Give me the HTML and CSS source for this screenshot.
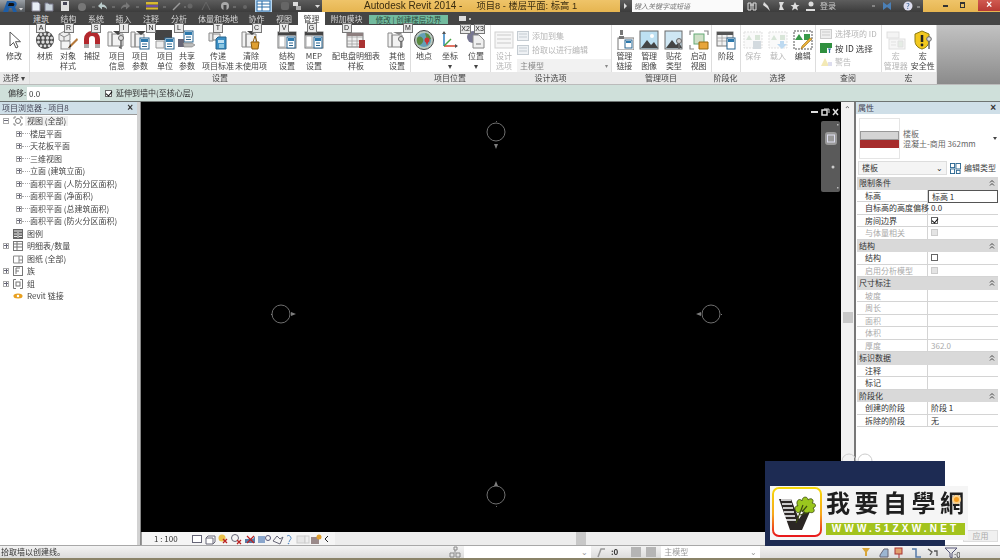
FILE: index.html
```html
<!DOCTYPE html>
<html lang="zh">
<head>
<meta charset="utf-8">
<title>Autodesk Revit 2014</title>
<link rel="stylesheet" href="styles.css">
</head>
<body>
<svg class="defs" width="0" height="0">
  <defs>
    <symbol id="i-cursor" viewBox="0 0 20 20"><path d="M6 2v14l3.500-3.500 2.500 5.500 2-1-2.500-5.300h5z" fill="#fff" stroke="#555"/></symbol>
    <symbol id="i-mat" viewBox="0 0 20 20"><circle cx="10" cy="10" r="9" fill="#4a4a4a"/><g fill="#ddd"><circle cx="6" cy="4.500" r="1.400"/><circle cx="10" cy="4" r="1.400"/><circle cx="14" cy="4.500" r="1.400"/><circle cx="3.500" cy="8" r="1.500"/><circle cx="8" cy="8" r="1.700"/><circle cx="12.500" cy="8" r="1.700"/><circle cx="16.500" cy="8" r="1.500"/><circle cx="3.500" cy="12" r="1.500"/><circle cx="8" cy="12" r="1.700"/><circle cx="12.500" cy="12" r="1.700"/><circle cx="16.500" cy="12" r="1.500"/><circle cx="6" cy="15.800" r="1.400"/><circle cx="10" cy="16" r="1.400"/><circle cx="14" cy="15.800" r="1.400"/></g></symbol>
    <symbol id="i-obj" viewBox="0 0 20 20"><path d="M1 4l6-3 5 3v6l-6 3-5-3z" fill="#eee" stroke="#888"/><path d="M1 4l5 3 6-3M6 7v6" fill="none" stroke="#888"/><rect x="3" y="11" width="9" height="8" fill="#f4f4f4" stroke="#888"/><path d="M19 8l-7 7-2 3 3-1 7-7z" fill="#b5793a"/><path d="M13 14l-3 4 3-1z" fill="#333"/></symbol>
    <symbol id="i-magnet" viewBox="0 0 20 20"><path d="M2 14V9a8 8 0 0 1 16 0v5h-5V9a3 3 0 0 0-6 0v5z" fill="#b3282d"/><rect x="2" y="14" width="5" height="4" fill="#aaa"/><rect x="13" y="14" width="5" height="4" fill="#aaa"/></symbol>
    <symbol id="i-info" viewBox="0 0 20 20"><path d="M1 2h4v14H1zM5 4h11v12H5z" fill="#f2f2f2" stroke="#888"/><path d="M6 1h10l-5 4z" fill="#444"/><circle cx="14" cy="8" r="2.500" fill="#ddd" stroke="#666"/><path d="M14 10v8l-2-1" fill="none" stroke="#666" stroke-width="1.500"/></symbol>
    <symbol id="i-param" viewBox="0 0 20 20"><path d="M1 2h4v15H1zM5 4h9v13H5z" fill="#f2f2f2" stroke="#888"/><path d="M6 1h10l-5 4z" fill="#444"/><rect x="10" y="8" width="9" height="11" fill="#fff" stroke="#29658f"/><rect x="11" y="9" width="7" height="3" fill="#2c79ad"/><path d="M12 14h5M12 16.500h5" stroke="#29658f"/></symbol>
    <symbol id="i-unit" viewBox="0 0 20 20"><rect x="0" y="0" width="17" height="10" fill="#444"/><rect x="10" y="8" width="9" height="11" fill="#fff" stroke="#29658f"/><rect x="11" y="9" width="7" height="3" fill="#2c79ad"/><path d="M12 14h5M12 16.500h5" stroke="#29658f"/><path d="M1 11h8v7H1z" fill="#eee" stroke="#999"/></symbol>
    <symbol id="i-share" viewBox="0 0 20 20"><rect x="7" y="1" width="9" height="11" fill="#fff" stroke="#29658f"/><rect x="8" y="2" width="7" height="3" fill="#2c79ad"/><path d="M9 7h5M9 9.500h5" stroke="#29658f"/><rect x="1" y="9" width="6" height="8" fill="#667"/><path d="M6 13h9l3 2-3 2H7z" fill="#bbb" stroke="#777" stroke-width=".6"/></symbol>
    <symbol id="i-trans" viewBox="0 0 20 20"><path d="M1 3h4v8H1z" fill="#e8e8e8" stroke="#888"/><path d="M5 4h7v6H5z" fill="#f2f2f2" stroke="#888"/><path d="M10 7h8v12H8V9z" fill="#3b8fc5" stroke="#26648e"/><path d="M10 10h6v3h-6z" fill="#bfe0f2"/><path d="M11 15h5M11 17h5" stroke="#dff"/><path d="M8 0h5l-2.500 3z" fill="#444"/></symbol>
    <symbol id="i-purge" viewBox="0 0 20 20"><path d="M1 2h4v15H1zM5 4h10v13H5z" fill="#f2f2f2" stroke="#888"/><path d="M6 1h10l-5 4z" fill="#444"/><path d="M10 12h8l-1 7h-6z" fill="#e0a030" stroke="#8a5d10"/><path d="M12 12l2-6 2 6" fill="none" stroke="#8a5d10"/></symbol>
    <symbol id="i-struct" viewBox="0 0 20 20"><rect x="1" y="2" width="18" height="16" fill="#eef3f7" stroke="#777"/><rect x="1" y="2" width="18" height="3.500" fill="#444"/><rect x="2" y="6" width="6" height="11" fill="#fff" stroke="#aaa"/><rect x="10" y="7" width="8" height="11" fill="#fff" stroke="#29658f"/><rect x="11" y="8" width="6" height="3" fill="#2c79ad"/><path d="M12 13h4M12 15.500h4" stroke="#29658f"/></symbol>
    <symbol id="i-panel" viewBox="0 0 20 20"><rect x="1" y="3" width="16" height="14" fill="#f0f0f0" stroke="#777"/><path d="M1 7h16M1 11h16M1 14h16M6 3v14M11 3v14" stroke="#999" stroke-width=".7"/><rect x="1" y="3" width="16" height="3" fill="#8d7f7f"/><rect x="13" y="10" width="6" height="8" fill="#a33"/></symbol>
    <symbol id="i-other" viewBox="0 0 20 20"><path d="M1 3h4v14H1zM5 5h10v12H5z" fill="#f2f2f2" stroke="#888"/><path d="M6 2h11l-5 3z" fill="#888"/><circle cx="14" cy="9" r="2.500" fill="#ddd" stroke="#666"/><path d="M14 11v7" stroke="#666" stroke-width="1.500"/></symbol>
    <symbol id="i-globe" viewBox="0 0 20 20"><circle cx="10" cy="10" r="9.500" fill="#b8c8bf" stroke="#444"/><circle cx="10" cy="10" r="7" fill="#64a0b8"/><path d="M3 8c3-3 5-1 6 1s-1 5-3 6-4-3-3-7zM11 3c3 0 5 2 6 6l-4 1z" fill="#5a8a40"/><circle cx="13" cy="10" r="2.500" fill="#cc3333"/><path d="M11.500 11.500l1.500 4 1.500-4z" fill="#cc3333"/></symbol>
    <symbol id="i-coord" viewBox="0 0 20 20"><path d="M4 2v14" stroke="#2d7fc0" stroke-width="1.500"/><path d="M4 16h13" stroke="#d9442f" stroke-width="1.500"/><path d="M4 16l7-7" stroke="#46a546" stroke-width="1.500"/><path d="M2 4l2-3 2 3zM15 14l3 2-3 2z" fill="#555"/></symbol>
    <symbol id="i-pos" viewBox="0 0 20 20"><circle cx="7" cy="7" r="6" fill="#557" opacity=".8"/><path d="M7 5h6l5 5v8H7z" fill="#f0f0f0" stroke="#888"/><path d="M10 14h5" stroke="#777"/></symbol>
    <symbol id="i-opt" viewBox="0 0 20 20"><rect x="1" y="2" width="18" height="16" fill="#f6f6f6" stroke="#ccc"/><path d="M3 5h14M3 9h14M3 13h14" stroke="#d5d5d5" stroke-width="1.500"/></symbol>
    <symbol id="i-link" viewBox="0 0 20 20"><rect x="4" y="8" width="16" height="12" fill="#fff" stroke="#777"/><rect x="11" y="10" width="7" height="8" fill="#fff" stroke="#29658f"/><rect x="12" y="11" width="5" height="2" fill="#2c79ad"/><path d="M6 0h3v5H6zM5 6h5v3H5z" fill="#777"/></symbol>
    <symbol id="i-img" viewBox="0 0 20 20"><rect x="1" y="1" width="18" height="18" fill="#bde0f2" stroke="#6a6a6a"/><path d="M2 18l6-8 4 5 3-3 4 6z" fill="#444"/><circle cx="13" cy="6" r="2" fill="#fff"/></symbol>
    <symbol id="i-decal" viewBox="0 0 20 20"><rect x="1" y="1" width="17" height="18" fill="#cfe7f4" stroke="#6a6a6a"/><path d="M2 18l6-8 4 5 3-3 3 6z" fill="#444"/><circle cx="15" cy="11" r="2.500" fill="#ccc" stroke="#666"/><path d="M15 13v6" stroke="#666" stroke-width="1.500"/></symbol>
    <symbol id="i-start" viewBox="0 0 20 20"><path d="M1 5V1h4M15 1h4v4M1 15v4h4" fill="none" stroke="#888" stroke-width="1.200"/><rect x="5" y="4" width="10" height="10" fill="#cfe0c8" stroke="#6a7"/><path d="M10 12h9v7h-9z" fill="#e8a53a" stroke="#9a6a10"/></symbol>
    <symbol id="i-phase" viewBox="0 0 20 20"><rect x="1" y="2" width="16" height="14" fill="#f2f2f2" stroke="#777"/><rect x="1" y="2" width="16" height="3" fill="#555"/><path d="M1 8h16M1 11h16M6 5v11M11 5v11" stroke="#999" stroke-width=".7"/><rect x="11" y="8" width="8" height="11" fill="#fff" stroke="#29658f"/><rect x="12" y="9" width="6" height="3" fill="#2c79ad"/></symbol>
    <symbol id="i-save" viewBox="0 0 20 20"><rect x="1" y="2" width="18" height="16" fill="#fafafa" stroke="#ddd" stroke-dasharray="2 1"/><path d="M6 5l3 5H3zM12 5h5v5h-5z" fill="#d4e3d4"/><rect x="10" y="11" width="8" height="8" fill="#cfd6dc"/></symbol>
    <symbol id="i-load" viewBox="0 0 20 20"><rect x="1" y="2" width="18" height="16" fill="#fafafa" stroke="#ddd" stroke-dasharray="2 1"/><path d="M6 5l3 5H3zM12 5h5v5h-5z" fill="#d4e3d4"/><path d="M12 11h4v3h3l-5 5-5-5h3z" fill="#b6d5ef"/></symbol>
    <symbol id="i-edit" viewBox="0 0 20 20"><rect x="1" y="1" width="18" height="18" fill="#fff" stroke="#555" stroke-dasharray="2 1"/><path d="M6 4l4 6H2z" fill="#3a9a4a"/><rect x="11" y="4" width="6" height="6" fill="#3a9a4a"/><path d="M19 9l-8 8-3 2 1-3 8-8z" fill="#e8b13a" stroke="#9a6a10" stroke-width=".6"/></symbol>
    <symbol id="i-mgr" viewBox="0 0 20 20"><rect x="1" y="2" width="12" height="6" fill="#f3f3f3" stroke="#ddd"/><rect x="3" y="9" width="16" height="10" fill="#f6f6f6" stroke="#ddd"/><path d="M5 12h5M5 15h5M12 11h5v6h-5z" fill="#e3ebe3" stroke="#ddd"/></symbol>
    <symbol id="i-shield" viewBox="0 0 20 20"><path d="M9 1l7 3v7c0 4-3 7-7 8-4-1-7-4-7-8V4z" fill="#f2c81f" stroke="#8c7a10"/><path d="M9 5v7" stroke="#222" stroke-width="2.500"/><circle cx="9" cy="15" r="1.400" fill="#222"/><circle cx="16" cy="9" r="2.300" fill="#ddd" stroke="#666"/><path d="M16 11v8" stroke="#666" stroke-width="1.500"/></symbol>
    <symbol id="i-ids" viewBox="0 0 12 10"><rect x=".5" y=".5" width="11" height="9" fill="#eee" stroke="#ccc"/><path d="M2 3h8M2 6h8" stroke="#ccc"/></symbol>
    <symbol id="i-idg" viewBox="0 0 12 10"><rect width="12" height="5" fill="#2f8f3f"/><rect y="5" width="7" height="5" fill="#2f8f3f"/><path d="M8 6h3M9.500 6v4" stroke="#2f6f9f" stroke-width="1.200"/></symbol>
    <symbol id="i-warn" viewBox="0 0 12 10"><path d="M5 1l4 8H1z" fill="#f3e9b5"/><rect x="8" y="5" width="4" height="4" fill="#dde"/></symbol>
    <symbol id="i-add" viewBox="0 0 12 10"><rect x=".5" y=".5" width="11" height="9" fill="#eef1f4" stroke="#c5ccd2"/><path d="M2 3h8M2 6h8" stroke="#c5ccd2"/></symbol>
    <symbol id="i-chev" viewBox="0 0 6 6"><path d="M1 2.500l2-2 2 2M1 5.500l2-2 2 2" fill="none" stroke="#444"/></symbol>
    <symbol id="i-views" viewBox="0 0 10 10"><circle cx="5" cy="5" r="2.500" fill="none" stroke="#777"/><path d="M1 3V1h2M7 1h2v2M1 7v2h2M7 9h2V7" fill="none" stroke="#888"/></symbol>
    <symbol id="i-legend" viewBox="0 0 10 10"><rect width="10" height="10" fill="#666"/><path d="M1 2h8M5 3v6M1 5h3M6 5h3M1 7.500h3M6 7.500h3" stroke="#eee"/></symbol>
    <symbol id="i-sched" viewBox="0 0 10 10"><rect x=".5" y=".5" width="9" height="9" fill="#fff" stroke="#777"/><path d="M.5 3h9M.5 6h9M4 .5v9" stroke="#777"/></symbol>
    <symbol id="i-sheet" viewBox="0 0 10 10"><path d="M.5 2h9v7h-9z" fill="#fff" stroke="#888"/><path d="M6 2v7M6 6h3.500" stroke="#888"/></symbol>
    <symbol id="i-fam" viewBox="0 0 10 10"><rect x=".5" y=".5" width="9" height="9" fill="#fff" stroke="#777"/><path d="M3 2h4M3 2v6M3 5h3" stroke="#777"/></symbol>
    <symbol id="i-grp" viewBox="0 0 10 10"><path d="M3 .5H.5v9H3M7 .5h2.500v9H7" fill="none" stroke="#777"/><rect x="3" y="3" width="4" height="4" fill="none" stroke="#777"/></symbol>
    <symbol id="i-rlink" viewBox="0 0 12 8"><ellipse cx="6" cy="4" rx="5.500" ry="3" fill="#e8a020"/><circle cx="6" cy="4" r="1.500" fill="#fff"/></symbol>
    <symbol id="i-edit-type" viewBox="0 0 12 12"><rect x=".5" y=".5" width="4.500" height="4.500" fill="#fff" stroke="#29658f"/><rect x="6.500" y=".5" width="5" height="6" fill="#fff" stroke="#29658f"/><rect x=".5" y="6.500" width="4.500" height="5" fill="#fff" stroke="#29658f"/><rect x="7" y="8" width="4" height="3.500" fill="#fff" stroke="#29658f"/></symbol>
  </defs>
</svg>

<div class="app">
  <header class="titlebar">
    <div class="appbtn">
      <svg width="25" height="15" viewBox="0 0 25 15"><path d="M2 15L7 1h6c4 0 5 4 2 6l3 8h-3.500l-3-7H9.500L7 15z" fill="#1d5ea8"/><path d="M9 3h3.500c2 0 2.500 2 1 3H8z" fill="#111"/><path d="M19 8h4l-2 2.500z" fill="#ddd"/></svg>
    </div>
    <svg class="qat" width="297" height="12" viewBox="25 0 297 12">
      <path d="M32 2h6l2 2v7h-8z" fill="#e8eef5" stroke="#889"/>
      <path d="M45 3h3l1 1h4v7h-8z" fill="#c8d2da" stroke="#778"/>
      <path d="M61 1h8v10h-8z" fill="#ddd"/><rect x="63" y="2" width="4" height="3" fill="#445"/>
      <circle cx="82" cy="7" r="4" fill="#777"/><path d="M92 7h3" stroke="#888"/>
      <path d="M98 6l4-4v2.500c3 0 5 2 5 5-1-2-3-2.500-5-2.500V9.500z" fill="#bcc"/><path d="M112 7h3" stroke="#888"/>
      <path d="M130 6l-4-4v2.500c-3 0-5 2-5 5 1-2 3-2.500 5-2.500V9.500z" fill="#777"/><path d="M136 7h3" stroke="#888"/>
      <rect x="146" y="2" width="12" height="2.500" fill="#d8b930"/><rect x="146" y="5" width="12" height="2" fill="#6b4fa3"/><rect x="146" y="7.500" width="12" height="2" fill="#d8b930"/><path d="M163 7h3" stroke="#888"/>
      <path d="M173 10l7-7" stroke="#999" stroke-width="1.500"/><path d="M184 7h2" stroke="#888"/>
      <circle cx="190" cy="6" r="2.500" fill="#666"/>
      <path d="M202 10l4-8 4 8" fill="none" stroke="#666"/>
      <circle cx="225" cy="6" r="4" fill="#aaa"/><rect x="223.500" y="5" width="3" height="5" fill="#444"/><path d="M233 7h3" stroke="#888"/>
      <circle cx="245" cy="7" r="2" fill="#666"/>
      <rect x="255" y="0" width="17" height="12" fill="#b8d7f0"/><rect x="257" y="1" width="13" height="10" fill="#fff" stroke="#2d6ea8"/><path d="M257 4h13M257 7h13M262 1v10" stroke="#2d6ea8"/>
      <rect x="281" y="2" width="8" height="8" rx="2" fill="#666"/><rect x="293" y="2" width="5" height="4" fill="#ddd"/><rect x="296" y="6" width="5" height="4" fill="#aaa"/><path d="M315 5h5l-2.500 3z" fill="#ddd"/>
    </svg>
    <div class="doc-title"><span>Autodesk Revit 2014 -</span><span class="doc-name">项目8 - 楼层平面: 标高 1</span></div>
    <div class="search-arrow"></div>
    <div class="search">键入关键字或短语</div>
    <div class="info">
      <svg width="72" height="12" viewBox="743 0 72 12"><path d="M748 3h3v7h-3zM753 3h3v7h-3zM750 5h4" stroke="#ddd" fill="none"/><path d="M764 2l4 4 2 5-3-3-4-3z" fill="#ddd"/><path d="M779 2h5l-2 4 2 4h-5l1-4z" fill="#ddd"/><path d="M795 2l1.500 3h3l-2.500 2 1 3.500-3-2-3 2 1-3.500-2.500-2h3z" fill="#ddd"/><circle cx="811" cy="4" r="2.500" fill="#ddd"/><path d="M806 10h10" stroke="#ddd" stroke-width="2"/></svg>
      <span class="login">登录</span>
      <svg class="info-r" width="65" height="12" viewBox="858 0 65 12"><path d="M872 6h3" stroke="#bbb"/><path d="M883 2l4 3 4-3v8l-4-3-4 3z" fill="#4b7fb5"/><circle cx="908" cy="6" r="4.500" fill="#dde"/><text x="906" y="9" font-size="8" fill="#2d5c8f">?</text><path d="M917 7h3" stroke="#bbb"/></svg>
    </div>
    <div class="winbtns">
      <span class="wb-min"></span>
      <span class="wb-max"></span>
      <span class="wb-close">×</span>
    </div>
  </header>

  <nav class="tabs">
    <div class="tab w28">建筑<b class="kt">A</b></div>
    <div class="tab w27">结构<b class="kt">R</b></div>
    <div class="tab w28">系统<b class="kt">S</b></div>
    <div class="tab w27">插入<b class="kt">I</b></div>
    <div class="tab w28">注释<b class="kt">N</b></div>
    <div class="tab w28">分析<b class="kt">L</b></div>
    <div class="tab w50">体量和场地<b class="kt">T</b></div>
    <div class="tab w27">协作<b class="kt">C</b></div>
    <div class="tab w28">视图<b class="kt">V</b></div>
    <div class="tab w27 active">管理<b class="kt">G</b></div>
    <div class="tab w43">附加模块<b class="kt">D</b></div>
    <div class="context">修改 | 创建楼层边界</div>
    <b class="kt kt-m">M</b>
    <b class="kt kt-x2">X2</b>
    <b class="kt kt-x3">X3</b>
    <svg class="tab-extra" width="12" height="8" viewBox="0 0 12 8"><rect width="7" height="5" y="1" fill="#ddd"/><rect x="10" y="3" width="2" height="2" fill="#bbb"/></svg>
  </nav>

  <section class="ribbon">
    <div class="panel p30">
      <div class="tools">
        <div class="tool t28"><svg class="ic"><use href="#i-cursor"/></svg><span>修改</span></div>
      </div>
      <div class="plabel">选择 ▾</div>
    </div>
    <div class="panel p381">
      <div class="tools tools-set">
        <div class="tool g2"><svg class="ic"><use href="#i-mat"/></svg><span>材质</span></div>
        <div class="tool g3"><svg class="ic"><use href="#i-obj"/></svg><span>对象<br>样式</span></div>
        <div class="tool g4"><svg class="ic"><use href="#i-magnet"/></svg><span>捕捉</span></div>
        <div class="tool g5"><svg class="ic"><use href="#i-info"/></svg><span>项目<br>信息</span></div>
        <div class="tool g3"><svg class="ic"><use href="#i-param"/></svg><span>项目<br>参数</span></div>
        <div class="tool g5"><svg class="ic"><use href="#i-unit"/></svg><span>项目<br>单位</span></div>
        <div class="tool g2"><svg class="ic"><use href="#i-share"/></svg><span>共享<br>参数</span></div>
        <div class="tool g11"><svg class="ic"><use href="#i-trans"/></svg><span>传递<br>项目标准</span></div>
        <div class="tool g13"><svg class="ic"><use href="#i-purge"/></svg><span>清除<br>未使用项</span></div>
        <div class="tool g16"><svg class="ic"><use href="#i-struct"/></svg><span>结构<br>设置</span></div>
        <div class="tool g7"><svg class="ic"><use href="#i-struct"/></svg><span>MEP<br>设置</span></div>
        <div class="tool g22"><svg class="ic"><use href="#i-panel"/></svg><span>配电盘明细表<br>样板</span></div>
        <div class="tool g21"><svg class="ic"><use href="#i-other"/></svg><span>其他<br>设置</span></div>
      </div>
      <div class="plabel">设置</div>
    </div>
    <div class="panel p79">
      <div class="tools">
        <div class="tool t26"><svg class="ic"><use href="#i-globe"/></svg><span>地点</span></div>
        <div class="tool t26"><svg class="ic"><use href="#i-coord"/></svg><span>坐标<br>▾</span></div>
        <div class="tool t26"><svg class="ic"><use href="#i-pos"/></svg><span>位置<br>▾</span></div>
      </div>
      <div class="plabel">项目位置</div>
    </div>
    <div class="panel p121">
      <div class="tools">
        <div class="tool t26 off"><svg class="ic"><use href="#i-opt"/></svg><span>设计<br>选项</span></div>
        <div class="stack">
          <div class="srow off"><svg class="sic"><use href="#i-add"/></svg>添加到集</div>
          <div class="srow off"><svg class="sic"><use href="#i-add"/></svg>拾取以进行编辑</div>
          <div class="rselect"><span>主模型</span><i>▾</i></div>
        </div>
      </div>
      <div class="plabel">设计选项</div>
    </div>
    <div class="panel p100">
      <div class="tools">
        <div class="tool t25"><svg class="ic"><use href="#i-link"/></svg><span>管理<br>链接</span></div>
        <div class="tool t25"><svg class="ic"><use href="#i-img"/></svg><span>管理<br>图像</span></div>
        <div class="tool t25"><svg class="ic"><use href="#i-decal"/></svg><span>贴花<br>类型</span></div>
        <div class="tool t25"><svg class="ic"><use href="#i-start"/></svg><span>启动<br>视图</span></div>
      </div>
      <div class="plabel">管理项目</div>
    </div>
    <div class="panel p29">
      <div class="tools">
        <div class="tool t28"><svg class="ic"><use href="#i-phase"/></svg><span>阶段</span></div>
      </div>
      <div class="plabel">阶段化</div>
    </div>
    <div class="panel p75">
      <div class="tools">
        <div class="tool t25 off"><svg class="ic"><use href="#i-save"/></svg><span>保存</span></div>
        <div class="tool t25 off"><svg class="ic"><use href="#i-load"/></svg><span>载入</span></div>
        <div class="tool t25"><svg class="ic"><use href="#i-edit"/></svg><span>编辑</span></div>
      </div>
      <div class="plabel">选择</div>
    </div>
    <div class="panel p66">
      <div class="tools">
        <div class="stack stack-q">
          <div class="srow off"><svg class="sic"><use href="#i-ids"/></svg>选择项的 ID</div>
          <div class="srow on"><svg class="sic"><use href="#i-idg"/></svg>按 ID 选择</div>
          <div class="srow off"><svg class="sic"><use href="#i-warn"/></svg>警告</div>
        </div>
      </div>
      <div class="plabel">查阅</div>
    </div>
    <div class="panel p55">
      <div class="tools">
        <div class="tool t28 off"><svg class="ic"><use href="#i-mgr"/></svg><span>宏<br>管理器</span></div>
        <div class="tool t27"><svg class="ic"><use href="#i-shield"/></svg><span>宏<br>安全性</span></div>
      </div>
      <div class="plabel">宏</div>
    </div>
    <div class="ribbon-empty"></div>
  </section>

  <section class="options">
    <label class="opt-label">偏移:</label>
    <div class="opt-input">0.0</div>
    <span class="cb cb-on opt-cb"></span>
    <span>延伸到墙中(至核心层)</span>
  </section>

  <main class="main">
    <aside class="browser">
      <div class="phead"><span>项目浏览器 - 项目8</span><b>×</b></div>
      <ul class="tree">
        <li class="r1"><i class="exp minus"></i><svg class="tic"><use href="#i-views"/></svg><span class="sel">视图 (全部)</span></li>
        <li class="r2"><i class="exp"></i><u></u>楼层平面</li>
        <li class="r2"><i class="exp"></i><u></u>天花板平面</li>
        <li class="r2"><i class="exp"></i><u></u>三维视图</li>
        <li class="r2"><i class="exp"></i><u></u>立面 (建筑立面)</li>
        <li class="r2"><i class="exp"></i><u></u>面积平面 (人防分区面积)</li>
        <li class="r2"><i class="exp"></i><u></u>面积平面 (净面积)</li>
        <li class="r2"><i class="exp"></i><u></u>面积平面 (总建筑面积)</li>
        <li class="r2"><i class="exp"></i><u></u>面积平面 (防火分区面积)</li>
        <li class="r1"><i class="noexp"></i><svg class="tic"><use href="#i-legend"/></svg>图例</li>
        <li class="r1"><i class="exp"></i><svg class="tic"><use href="#i-sched"/></svg>明细表/数量</li>
        <li class="r1"><i class="noexp"></i><svg class="tic"><use href="#i-sheet"/></svg>图纸 (全部)</li>
        <li class="r1"><i class="exp"></i><svg class="tic"><use href="#i-fam"/></svg>族</li>
        <li class="r1"><i class="exp"></i><svg class="tic"><use href="#i-grp"/></svg>组</li>
        <li class="r1"><i class="noexp"></i><svg class="tic"><use href="#i-rlink"/></svg>Revit 链接</li>
      </ul>
    </aside>
    <div class="splitter"></div>

    <div class="view">
      <div class="canvas">
        <svg class="marks" width="700" height="429" viewBox="141 103 700 429">
          <g fill="none" stroke="#6f6f6f" stroke-width="1">
            <circle cx="496" cy="132" r="9"/><circle cx="281" cy="314" r="9"/><circle cx="711" cy="314" r="9"/><circle cx="496" cy="495" r="9"/>
          </g>
          <g fill="#7d7d7d">
            <path d="M494 144h4l-2 5zM291 312v4l5-2zM701 312v4l-5-2zM494 486h4l-2-5z"/>
            <path d="M496 121h.8v1h-.8zM271 314h1v1h-1zM721 314h1v1h-1zM496 506h.8v1h-.8z"/>
          </g>
        </svg>
        <svg class="vctl" width="28" height="8" viewBox="0 0 28 8"><path d="M0 4h7" stroke="#ddd" stroke-width="2"/><rect x="11" y="2" width="5" height="5" fill="none" stroke="#ddd" stroke-width="1.500"/><path d="M13 1h5v4" stroke="#ddd" fill="none"/><path d="M22 1l5 6M27 1l-5 6" stroke="#ddd" stroke-width="1.500"/></svg>
        <div class="navbar">
          <svg width="19" height="71" viewBox="0 0 19 71"><rect x="4" y="11" width="12" height="13" rx="3" fill="#9a9a9a"/><rect x="6.500" y="14" width="7" height="7" fill="none" stroke="#dde"/><circle cx="12" cy="46" r="1.500" fill="#ccc"/><path d="M16 3h1.500v1.500H16zM16 66h1.500v1.500H16z" fill="#bbb"/></svg>
        </div>
      </div>
      <div class="viewbar">
        <span class="scale">1 : 100</span>
        <svg width="140" height="12" viewBox="190 0 140 12">
          <rect x="191.500" y="2.500" width="9" height="7" fill="#fff" stroke="#667"/>
          <path d="M205 5h7v6h-7zM205 5l2-2h7v6l-2 2" fill="#fff" stroke="#667"/>
          <circle cx="221" cy="5" r="3.500" fill="#e9c24a"/><path d="M222 6l4 4M226 6l-4 4" stroke="#b22" stroke-width="1.300"/>
          <circle cx="234" cy="5" r="3.500" fill="none" stroke="#667"/><path d="M236 7l4 4M240 7l-4 4" stroke="#b22" stroke-width="1.300"/>
          <path d="M244 6h8l2-3v7h-10z" fill="#567ba8"/><path d="M246 3l7 7M253 3l-7 7" stroke="#b22" stroke-width="1.200"/>
          <path d="M257 3h7v7h-7z" fill="#8aa6cc"/><circle cx="267" cy="5" r="2.500" fill="none" stroke="#557"/>
          <path d="M272 8l4-5 3 3 3-2-3 7z" fill="none" stroke="#667"/>
          <path d="M286 3a2.500 2.500 0 0 1 3 4l-1 2" fill="none" stroke="#5b8fc7"/><circle cx="287.500" cy="10.500" r=".8" fill="#5b8fc7"/>
          <rect x="296" y="3" width="8" height="7" fill="#e6e6e6" stroke="#ccc"/><rect x="304" y="3" width="4" height="7" fill="#eee" stroke="#ccc"/>
          <path d="M310 4h8v7h-8z" fill="#9a8a8a"/><circle cx="318" cy="4" r="2.500" fill="#e0a030"/>
          <path d="M327 3l-3 3 3 3" fill="none" stroke="#222"/>
        </svg>
        <div class="hscroll"><span></span></div>
      </div>
    </div>

    <div class="vscroll"><span class="up">⌃</span><span class="thumb"></span></div>

    <aside class="props">
      <div class="phead"><span>属性</span><b>×</b></div>
      <div class="type">
        <div class="swatch"><i class="s-g"></i><i class="s-r"></i></div>
        <div class="type-text">楼板<br>混凝土-商用 362mm</div>
        <span class="type-arrow"></span>
      </div>
      <div class="filter">
        <div class="fselect"><span>楼板</span><i>⌄</i></div>
        <div class="etype"><svg width="11" height="11"><use href="#i-edit-type"/></svg>编辑类型</div>
      </div>
      <div class="ptable">
        <div class="group">限制条件<svg class="chev"><use href="#i-chev"/></svg></div>
        <div class="prow"><span>标高</span><span class="val active">标高 1</span></div>
        <div class="prow"><span>自标高的高度偏移</span><span class="val">0.0</span></div>
        <div class="prow"><span>房间边界</span><span class="val"><i class="cb cb-on"></i></span></div>
        <div class="prow dis"><span>与体量相关</span><span class="val"><i class="cb cb-dis"></i></span></div>
        <div class="group">结构<svg class="chev"><use href="#i-chev"/></svg></div>
        <div class="prow"><span>结构</span><span class="val"><i class="cb"></i></span></div>
        <div class="prow dis"><span>启用分析模型</span><span class="val"><i class="cb cb-dis"></i></span></div>
        <div class="group">尺寸标注<svg class="chev"><use href="#i-chev"/></svg></div>
        <div class="prow dis"><span>坡度</span><span class="val"></span></div>
        <div class="prow dis"><span>周长</span><span class="val"></span></div>
        <div class="prow dis"><span>面积</span><span class="val"></span></div>
        <div class="prow dis"><span>体积</span><span class="val"></span></div>
        <div class="prow dis"><span>厚度</span><span class="val">362.0</span></div>
        <div class="group">标识数据<svg class="chev"><use href="#i-chev"/></svg></div>
        <div class="prow"><span>注释</span><span class="val"></span></div>
        <div class="prow"><span>标记</span><span class="val"></span></div>
        <div class="group">阶段化<svg class="chev"><use href="#i-chev"/></svg></div>
        <div class="prow"><span>创建的阶段</span><span class="val">阶段 1</span></div>
        <div class="prow"><span>拆除的阶段</span><span class="val">无</span></div>
      </div>
      <div class="apply">应用</div>
    </aside>
  </main>

  <footer class="status">
    <span class="status-msg">拾取墙以创建线。</span>
    <svg class="st-ic" width="12" height="12" viewBox="0 0 12 12"><path d="M5 1h3v3H5zM1 7h4v4H1zM7 7h4v4H7zM6 4v3" fill="none" stroke="#888"/></svg>
    <div class="st-select st-w"><i>⌄</i></div>
    <svg class="st-ic2" width="9" height="12" viewBox="0 0 9 12"><path d="M1 11l3-8h4" fill="none" stroke="#999" stroke-width="1.500"/></svg>
    <b class="st-zero">:0</b>
    <i class="st-sq"></i><i class="st-sq"></i>
    <div class="st-select st-m"><span>主模型</span><i>⌄</i></div>
    <svg class="st-right" width="100" height="13" viewBox="860 0 100 13">
      <path d="M862 2h8l-3 4v4h-2V6z" fill="#d9a63a"/>
      <path d="M880 9l4-6h4v8h-8z" fill="#9cb6d1" stroke="#667"/>
      <rect x="895" y="2" width="7" height="6" fill="#e0a070" stroke="#a33"/><path d="M899 8v4" stroke="#a33"/>
      <path d="M912 3h4v8h5" fill="none" stroke="#557aa8" stroke-width="1.500"/>
      <path d="M928 3l4 3-2 3M934 5h3v5" fill="none" stroke="#555" stroke-width="1.300"/>
      <path d="M945 2h12l-5 5v5l-2-1V7z" fill="none" stroke="#557"/><text x="954" y="12" font-size="8" fill="#333">:0</text>
    </svg>
  </footer>

  <svg class="arcs" width="32" height="12" viewBox="0 0 32 12"><path d="M1 12a7 7 0 0 1 14 0M17 12a7 7 0 0 1 14 0" fill="none" stroke="#ccc"/></svg>

  <aside class="watermark">
    <div class="wm-card">
      <div class="wm-logo">
        <svg width="50" height="50" viewBox="0 0 50 50">
          <defs><linearGradient id="wmg" x1="0" y1="0" x2="0" y2="1"><stop offset="0" stop-color="#f7d80a"/><stop offset=".55" stop-color="#f6a71c"/><stop offset="1" stop-color="#e8181c"/></linearGradient></defs>
          <rect x="1" y="1" width="48" height="48" rx="6" fill="#fff" stroke="url(#wmg)" stroke-width="2"/>
          <path d="M7 12h12l8 20 9-14 4 2-10 23H18z" fill="#2b2624"/>
          <path d="M9 13h10M10 17h10M11 21h10M12 25h10M13 29h10M14 33h10" stroke="#fff" stroke-width="1.300"/>
          <path d="M26 26c-5-3-3-8 0-7-3-4 1-9 4-5 0-5 6-5 6-1 3-3 7 0 4 3 4 0 5 4 1 5 3 3 0 6-4 4-2 2-5 1-6-2z" fill="#9ac61e" stroke="#3c4a10" stroke-width=".8"/>
          <path d="M24 36l7-18M30 25l5-6M28 28l7-2" stroke="#3c4a10" stroke-width="1.200" fill="none"/>
        </svg>
      </div>
      <div class="wm-text">
        <div class="wm-name">我要自學網<i class="wm-dot"></i></div>
        <div class="wm-url">WWW.51ZXW.NET</div>
      </div>
    </div>
  </aside>
</div>
</body>
</html>
```

FILE: styles.css
```css
* { box-sizing: border-box; }
html, body { margin: 0; padding: 0; }
body {
  width: 1000px; height: 560px; overflow: hidden; background: #fff;
  font: 8px/10px "Noto Sans CJK SC", "Liberation Sans", sans-serif;
  color: #333;
}
.defs { position: absolute; }
.app {
  position: relative; width: 1000px; height: 560px;
  display: grid; grid-template-rows: 12px 13px 60px 17px 443px 15px;
  filter: blur(.35px);
}
i { font-style: normal; }
ul { list-style: none; margin: 0; padding: 0; }

/* title bar */
.titlebar { display: flex; background: linear-gradient(#5d5d5d, #3c3c3c); position: relative; z-index: 2; }
.appbtn { width: 25px; height: 15px; background: linear-gradient(#9aa0a6, #3f4347); }
.qat { flex: none; }
.doc-title {
  width: 298px; padding-left: 42px; display: flex; align-items: center;
  background: linear-gradient(#efc469, #e6b550);
  font: 10px/12px "Liberation Sans", "Noto Sans CJK SC", sans-serif; color: #3a2c10; white-space: nowrap;
}
.doc-name { margin-left: 14px; font-size: 9.300px; }
.search-arrow { width: 12px; position: relative; }
.search-arrow::after {
  content: ""; position: absolute; left: 4px; top: 3px;
  border-left: 3px solid #ddd; border-top: 3px solid transparent; border-bottom: 3px solid transparent;
}
.search { width: 111px; background: #fafafa; font-size: 7px; font-style: italic; color: #777; line-height: 12px; padding-left: 2px; }
.info { width: 180px; display: flex; color: #ccc; line-height: 12px; }
.login { width: 43px; padding-left: 5px; }
.winbtns {
  width: 77px; display: flex; align-items: flex-start; background: linear-gradient(#efc469, #e6b550);
}
.wb-min { width: 6px; height: 2px; background: #333; margin: 5px 0 0 20px; }
.wb-max { width: 6px; height: 6px; border: 1px solid #333; border-top-width: 2px; margin: 2px 0 0 12px; }
.wb-close {
  width: 26px; height: 11px; margin-left: 13px; background: linear-gradient(#d05a50, #b83a34);
  color: #fff; font: bold 10px/10px "Liberation Sans", sans-serif; text-align: center;
}

/* tabs */
.tabs { display: flex; padding-left: 27px; background: #454545; color: #d8d8d8; position: relative; z-index: 3; line-height: 13px; }
.tab { position: relative; text-align: center; }
.tab.active { background: #fff; color: #444; }
.w27 { width: 27px; } .w28 { width: 28px; } .w43 { width: 43px; } .w50 { width: 50px; }
.kt {
  position: absolute; top: 11px; left: 50%; width: 10px; height: 10px; margin-left: -5px;
  background: #e9e9e9; border: 1px solid #777; color: #222;
  font: 7px/8px "Liberation Sans", sans-serif; text-align: center;
}
.kt-m { left: 408px; top: 11px; }
.kt-x2 { left: 465px; top: 12px; width: 11px; }
.kt-x3 { left: 479px; top: 12px; width: 11px; }
.context {
  width: 79px; height: 9px; margin: 3px 0 0 1px; background: #72bb9e; color: #2e4a3e;
  line-height: 9px; text-align: center; font-size: 7.500px;
}
.tab-extra { margin: 3px 0 0 11px; }

/* ribbon */
.ribbon { display: flex; background: #fff; border-bottom: 1px solid #bbb; }
.panel { display: flex; flex-direction: column; border-right: 1px solid #ddd; }
.p30 { width: 30px; } .p381 { width: 381px; padding-left: 3px; } .p79 { width: 80px; } .p121 { width: 121px; }
.p100 { width: 100px; } .p29 { width: 29px; } .p75 { width: 75px; } .p66 { width: 66px; } .p55 { width: 55px; }
.panel .tools { flex: 1; display: flex; min-height: 0; }
.plabel { height: 12px; margin-left: -1px; background: #e9e9e9; text-align: center; line-height: 12px; color: #444; }
.p381 .plabel { margin-left: -3px; }
.tool { display: flex; flex-direction: column; align-items: center; padding-top: 5px; text-align: center; color: #444; }
.tool span { white-space: nowrap; margin-top: 1px; }
.tools-set .tool { width: 20px; }
.g2 { margin-left: 2px; } .g3 { margin-left: 3px; } .g4 { margin-left: 4px; } .g5 { margin-left: 5px; }
.g7 { margin-left: 7px; } .g11 { margin-left: 11px; } .g13 { margin-left: 13px; } .g16 { margin-left: 16px; }
.g21 { margin-left: 21px; } .g22 { margin-left: 22px; }
.ic { width: 20px; height: 20px; flex: none; }
.off { color: #b5b5b5; }
.off .ic { opacity: .9; }
.t25 { width: 25px; } .t26 { width: 26px; } .t27 { width: 27px; } .t28 { width: 28px; }
.stack { flex: 1; padding-top: 4px; }
.srow { display: flex; align-items: center; height: 14px; white-space: nowrap; }
.srow.on { color: #333; font-size: 8.500px; }
.sic { width: 12px; height: 10px; margin-right: 3px; flex: none; }
.rselect {
  display: flex; justify-content: space-between; width: 94px; height: 13px; margin-top: 2px;
  background: #f2f2f2; padding: 0 3px; line-height: 13px; color: #888;
}
.rselect i { font-size: 6px; }
.stack-q { padding-left: 4px; padding-top: 2px; }
.ribbon-empty { flex: 1; background: linear-gradient(#c2c2c2, #8b8b8b); }

/* options */
.options {
  display: flex; align-items: center; padding-left: 8px; background: #cfe0da; color: #333;
  border-bottom: 1px solid #6e7472;
}
.opt-label { width: 19px; }
.opt-input { width: 73px; height: 13px; background: #fff; padding-left: 2px; line-height: 13px; }
.opt-cb { margin: 0 4px 0 5px; }
.cb { display: inline-block; width: 7px; height: 7px; background: #fff; border: 1px solid #666; position: relative; }
.cb-on::after {
  content: ""; position: absolute; left: 1px; top: -1px; width: 3px; height: 5px;
  border: solid #111; border-width: 0 1.500px 1.500px 0; transform: rotate(40deg);
}
.cb-dis { background: #e4e4e4; border-color: #ccc; }

/* main */
.main { display: flex; min-height: 0; }
.browser { width: 137px; background: #fff; }
.phead {
  display: flex; justify-content: space-between; height: 12px; padding: 0 4px 0 2px;
  background: #cfdfe8; line-height: 12px; color: #445;
}
.phead b { font: bold 10px/11px "Liberation Sans", sans-serif; color: #333; }
.tree { border-top: 1px solid #999; height: 100%; }
.tree li { display: flex; align-items: center; height: 12.500px; white-space: nowrap; color: #444; }
.r1 { padding-left: 3px; }
.r2 { padding-left: 16px; }
.exp, .noexp { width: 6px; height: 6px; flex: none; }
.exp { border: 1px solid #aaa; position: relative; background: #fff; }
.exp::before { content: ""; position: absolute; left: 0; top: 1px; width: 4px; height: 1px; background: #667; }
.exp::after { content: ""; position: absolute; left: 1.500px; top: 0; width: 1px; height: 4px; background: #667; }
.exp.minus::after { display: none; }
.r2 u { width: 8px; border-top: 1px dotted #aaa; text-decoration: none; }
.tic { width: 10px; height: 10px; margin: 0 4px; flex: none; }
.sel { background: #f0f0f0; padding: 0 2px; margin-left: -2px; }
.splitter { width: 4px; background: #d2d2d2; border-right: 1px solid #888; }

.view { width: 700px; display: flex; flex-direction: column; }
.canvas { position: relative; height: 430px; background: #000; border-top: 1px solid #000; }
.marks { position: absolute; left: 0; top: 0; }
.vctl { position: absolute; right: 2px; top: 5px; }
.navbar {
  position: absolute; left: 680px; top: 18px; width: 19px; height: 71px; background: #5a5a5a; border-radius: 2px; display: flex;
}
.viewbar { flex: 1; display: flex; align-items: center; background: #f5f5f5; border-left: 1px solid #999; }
.scale { width: 49px; padding-left: 12px; }
.hscroll { flex: 1; align-self: stretch; margin-left: 4px; background: #ededed; display: flex; padding-left: 241px; }
.hscroll span { width: 10px; background: #c8c8c8; }

.vscroll {
  width: 15px; background: #f2f2f2; border-right: 2px solid #777; display: flex; flex-direction: column;
  align-items: center; color: #555;
}
.up { font: 8px/10px "Liberation Sans", sans-serif; margin-top: 3px; }
.thumb { width: 10px; height: 11px; background: #c8c8c8; margin-top: 197px; }

.props { flex: 1; background: #fff; display: flex; flex-direction: column; position: relative; }
.type { display: flex; height: 47px; padding: 4px 0 0 3px; position: relative; }
.swatch { width: 41px; height: 41px; border: 1px solid #e5e5e5; padding-top: 12px; flex: none; }
.swatch i { display: block; }
.s-g { height: 9px; background: #d4d4d4; border: 1px solid #999; }
.s-r { height: 8px; background: #a62c2c; }
.type-text { margin: 11px 0 0 3px; line-height: 10px; color: #666; white-space: nowrap; }
.type-arrow {
  position: absolute; right: 3px; top: 23px;
  border-top: 3px solid #444; border-left: 2px solid transparent; border-right: 2px solid transparent;
}
.filter { display: flex; height: 14px; padding-left: 2px; }
.fselect {
  width: 89px; display: flex; justify-content: space-between; background: #f4f4f4; border: 1px solid #ddd;
  padding: 0 3px; line-height: 12px;
}
.etype { display: flex; align-items: center; gap: 3px; margin-left: 3px; color: #444; }
.ptable { margin: 2px 2px 0 1px; }
.group {
  display: flex; justify-content: space-between; align-items: center; height: 12.500px; padding: 0 3px 0 2px;
  background: #d9d9d9; color: #333; line-height: 12px;
}
.chev { width: 6px; height: 6px; }
.prow { display: grid; grid-template-columns: 71px 1fr; height: 12.500px; border-bottom: 1px solid #d4d4d4; line-height: 11.500px; color: #333; }
.prow > span:first-child { padding-left: 8px; white-space: nowrap; border-right: 1px solid #d4d4d4; }
.val { padding-left: 3px; display: flex; align-items: center; }
.val.active { border: 1px solid #555; background: #fff; }
.dis { color: #aaa; }
.apply { position: absolute; right: 2px; bottom: 3px; width: 35px; height: 12px; background: #f0f0f0; border: 1px solid #ddd; color: #aaa; text-align: center; line-height: 10px; }

/* status */
.status {
  display: flex; align-items: center; padding-left: 1px;
  background: linear-gradient(#f3f3f3, #dcdcdc); border-top: 1px solid #a8a8a8; border-bottom: 2px solid #8a8368;
}
.status-msg { width: 448px; }
.st-ic { margin-right: 3px; }
.st-select {
  display: flex; justify-content: space-between; height: 12px; background: #fff; padding: 0 3px;
  line-height: 11px; color: #999;
}
.st-w { width: 127px; justify-content: flex-end; }
.st-ic2 { margin-left: 6px; }
.st-zero { margin: 0 13px 0 5px; color: #333; }
.st-sq { width: 10px; height: 10px; background: #b5b5b5; margin-right: 5px; }
.st-m { width: 99px; }
.st-right { margin-left: 100px; }

/* watermark */
.arcs { position: absolute; left: 841px; top: 449px; }
.watermark { position: absolute; left: 765px; top: 461px; width: 180px; height: 85px; background: #1d2b53; }
.wm-card {
  position: absolute; left: 5px; top: 25px; width: 198px; height: 54px; background: #f5f5f5;
  display: flex; padding: 1px 0 0 2px;
}
.wm-text { margin-left: 4px; width: 139px; }
.wm-name {
  position: relative; height: 35px; padding-top: 3px; font: bold 24px/24px "Noto Sans CJK TC", "Noto Sans CJK SC", sans-serif;
  letter-spacing: 4.500px; color: #1f1f1f; white-space: nowrap;
}
.wm-dot { position: absolute; left: 126px; top: 8px; width: 9px; height: 9px; border-radius: 50%; background: #f59c1f; border: 2px solid #f9d08a; }
.wm-url {
  height: 12px; background: #a3c31d; color: #fff; text-align: center;
  font: bold 10px/12px "Liberation Sans", sans-serif; letter-spacing: 3.200px; margin-top: 1px; white-space: nowrap;
}
```
